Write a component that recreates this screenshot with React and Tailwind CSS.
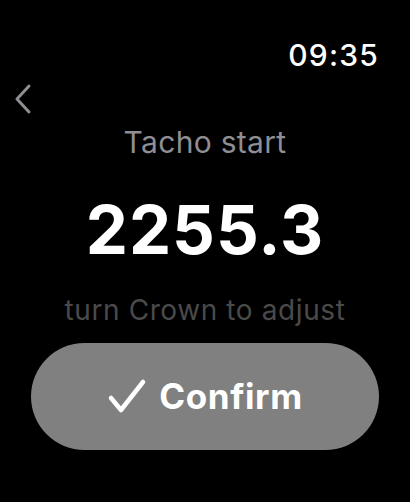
export default function App() {
  return (
    <div
      className="w-[410px] h-[502px] bg-black flex flex-col overflow-hidden"
      style={{ fontFamily: 'Inter, "Noto Sans", sans-serif' }}
    >
      <div className="flex justify-end pr-[31px] pt-[35px] h-[80px]">
        <span className="text-white text-[30px] font-medium leading-[40px] tracking-[1.2px]">09:35</span>
      </div>
      <div className="relative flex flex-col items-center">
        <svg className="absolute left-[12px] top-[3px]" width="22" height="32" viewBox="0 0 22 32">
          <path d="M17 3 L5 16 L17 29" fill="none" stroke="#8d8d92" strokeWidth="3" strokeLinecap="round" strokeLinejoin="round" />
        </svg>
        <p className="text-[#8e8e93] text-[30px] leading-[40px] mt-[42px] tracking-[0.3px]">Tacho start</p>
        <p className="text-white text-[67px] font-bold leading-[80px] mt-[28px] tracking-[1px]">2255.3</p>
        <p className="text-[#4a4a4a] text-[28px] leading-[36px] mt-[22px] tracking-[0.6px]">turn Crown to adjust</p>
      </div>
      <div className="px-[31px] mt-[15px]">
        <button className="w-full h-[107px] rounded-[54px] bg-[#808080] flex items-center justify-center gap-[10px]">
          <svg width="42" height="38" viewBox="0 0 42 38">
            <path d="M4 20 L14 32 L36 4" fill="none" stroke="white" strokeWidth="4.5" strokeLinecap="round" strokeLinejoin="round" />
          </svg>
          <span className="text-white text-[35px] font-bold tracking-[0.6px]">Confirm</span>
        </button>
      </div>
    </div>
  )
}
